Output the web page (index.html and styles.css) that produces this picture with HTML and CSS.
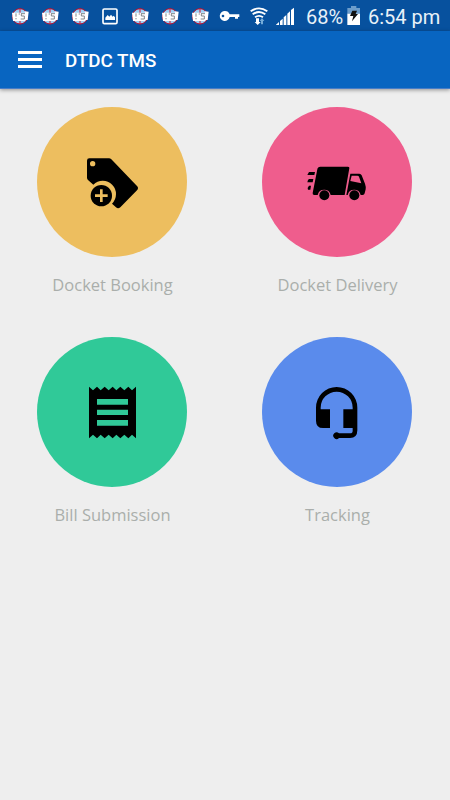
FILE: index.html
```html
<!DOCTYPE html>
<html lang="en">
<head>
  <meta charset="UTF-8" />
  <meta name="viewport" content="width=device-width, initial-scale=1.0" />
  <title>DTDC TMS</title>
  <link rel="stylesheet" href="styles.css">
</head>
<body>
  <svg width="0" height="0" class="symbols">
    <symbol id="app-badge" viewBox="0 0 90 93">
      <circle cx="45" cy="49" r="23" fill="#9fd0f4" stroke="#b50f2e" stroke-width="3" />
      <path d="M45 25v48" stroke="#d4142f" stroke-width="3" />
      <path d="M21 38h39v-4l11 1-3 25h-7v3H24z" fill="#fff" />
      <path d="M33 40v10M33 54v4M41 42h4M48 41h12M49 41v7h9v9H47" fill="none" stroke="#70767c" stroke-width="2.6" />
    </symbol>
  </svg>

  <div class="status-bar">
    <div class="status-icons">
      <svg><use href="#app-badge" /></svg>
      <svg><use href="#app-badge" /></svg>
      <svg><use href="#app-badge" /></svg>
      <svg viewBox="0 0 90 93">
        <rect x="24" y="27" width="42" height="44" rx="4" fill="none" stroke="#fff" stroke-width="5" />
        <path d="M31 60V53l7-8 5 5 5-6 5 6 3-3 4 5v8z" fill="#fff" />
      </svg>
      <svg><use href="#app-badge" /></svg>
      <svg><use href="#app-badge" /></svg>
      <svg><use href="#app-badge" /></svg>
      <svg viewBox="0 0 90 93">
        <path fill="#fff" fill-rule="evenodd" d="M30 33a15 15 0 0 1 14 10h29v8h-4v5h-9v-5H44A15 15 0 1 1 30 33zM24 44a4 4 0 1 0 0 8 4 4 0 0 0 0-8z" />
      </svg>
      <svg viewBox="0 0 90 93">
        <g fill="none" stroke="#fff" stroke-width="5.5">
          <path d="M17 34q25-18 50 0" />
          <path d="M23 43q19-14 38 0" />
          <path d="M30 52q12-9 24 0" />
        </g>
        <path d="M33 55h9v11h5l-9 9-9-9h4z" fill="#fff" />
        <path d="M48 73V63h-4l7-9 7 9h-4v10z" fill="#75acd8" />
      </svg>
      <svg viewBox="0 0 90 93">
        <g fill="#fff">
          <path d="M48 30l9-7v52h-9z" />
          <path d="M37 41l8-7v41h-8z" />
          <path d="M26 52l8-7v30h-8z" />
          <path d="M15 63l8-7v19h-8z" />
          <path d="M3 74l9-8v9H3z" />
        </g>
      </svg>
    </div>
    <span class="percent">68%</span>
    <svg class="battery" viewBox="0 0 42 60">
      <path d="M12 0h16v6h11v17H1V6h11z" fill="#6c9dcb" />
      <path d="M1 23h38v34H1z" fill="#fff" />
      <path d="M16 14h14l-4 10h7L15 46l4-16H9z" fill="#111" />
    </svg>
    <span class="clock">6:54 pm</span>
  </div>

  <header class="header">
    <button class="menu-btn" aria-label="Menu">
      <span></span>
      <span></span>
      <span></span>
    </button>
    <h1>DTDC TMS</h1>
  </header>

  <main class="menu">
    <a href="#" class="menu-item">
      <div class="circle booking">
        <svg viewBox="0 0 255 225">
          <path fill-rule="evenodd" d="M58 40h59q4 0 7 3l77 80q6 6 0 13l-50 51q-7 6-13 0l-12-11a39 39 0 0 0-56-57L54 105q-3-3-3-7V47q0-7 7-7zM68 48a8 8 0 1 0 0 16 8 8 0 0 0 0-16z" />
          <circle cx="94" cy="152" r="32" />
          <path class="cut" d="M94 133v38M75 152h38" />
        </svg>
      </div>
      <p>Docket Booking</p>
    </a>
    <a href="#" class="menu-item">
      <div class="circle delivery">
        <svg viewBox="0 0 255 225">
          <path d="M76 65h83q5 0 4 5l-14 80h-42a20 20 0 0 0-39 0H58q-6 0-5-6l14-71q1-8 9-8z" />
          <path fill-rule="evenodd" d="M166 86h27q5 0 7 5l10 25q3 8 2 17l-3 12q-1 5-6 5h-6a20 20 0 0 0-39 0h-4zM170 92l-4 16 33 7-7-20q-1-3-5-3z" />
          <circle cx="88" cy="151" r="15" />
          <circle cx="178" cy="151" r="15" />
          <path d="M42 81h18l-2 9H37zM42 102h13l-2 10H37l2-7zM42 122h6l-2 12h-7l-1-5z" />
        </svg>
      </div>
      <p>Docket Delivery</p>
    </a>
    <a href="#" class="menu-item">
      <div class="circle bill">
        <svg viewBox="0 0 255 225">
          <path fill-rule="evenodd" d="M57 35l12 11 12-11 11 11 12-11 12 11 12-11 11 11 12-11 12 11 12-11 11 11 12-11v155l-12-11-11 11-12-11-12 11-12-11-11 11-12-11-12 11-12-11-11 11-12-11-12 11zM81 72v17h93V72zM81 104v16h93v-16zM81 135v17h93v-17z" />
        </svg>
      </div>
      <p>Bill Submission</p>
    </a>
    <a href="#" class="menu-item">
      <div class="circle tracking">
        <svg viewBox="0 0 255 225">
          <path d="M125 36a62 62 0 0 1 62 62v68q0 23-22 23h-33a10 10 0 1 1 0-14h33q8 0 8-8v-8h-28v-56h28v-5a48 48 0 0 0-96 0v5h28v56H84q-21 0-21-22V98a62 62 0 0 1 62-62z" />
        </svg>
      </div>
      <p>Tracking</p>
    </a>
  </main>
</body>
</html>
```
FILE: styles.css
```css
* {
  box-sizing: border-box;
  margin: 0;
  padding: 0;
}

body {
  font-family: Roboto, "Liberation Sans", sans-serif;
  background: #eeeeee;
  min-height: 100vh;
  overflow: hidden;
}

.symbols {
  display: none;
}

.status-bar {
  display: flex;
  align-items: center;
  height: 31px;
  padding-left: 5px;
  background: #07519e;
  color: #e9f1f8;
  font-size: 20px;
  line-height: 31px;
  white-space: nowrap;
}

.status-icons {
  display: flex;
}

.status-icons svg {
  display: block;
  width: 30px;
  height: 31px;
}

.percent {
  width: 36px;
  margin-left: 1px;
  padding-top: 3px;
}

.battery {
  width: 14px;
  height: 20px;
  margin-left: 5px;
}

.clock {
  margin-left: 7px;
  padding-top: 3px;
}

.header {
  display: flex;
  align-items: center;
  height: 58px;
  padding-left: 18px;
  background: #0865c1;
  border-bottom: 1px solid #477dc7;
  box-shadow: 0 1px 4px rgba(0, 0, 0, 0.4);
  color: #fff;
}

.header h1 {
  margin-left: 23px;
  padding-top: 2px;
  font-size: 18.8px;
  font-weight: 500;
}

.menu-btn {
  display: flex;
  flex-direction: column;
  gap: 4px;
  width: 24px;
  border: none;
  background: none;
  cursor: pointer;
}

.menu-btn span {
  height: 3px;
  background: #fff;
}

.menu {
  display: grid;
  grid-template-columns: 1fr 1fr;
  grid-auto-rows: 230px;
  padding-top: 18.4px;
}

.menu-item {
  display: flex;
  flex-direction: column;
  align-items: center;
  color: #aaaeab;
  text-decoration: none;
}

.circle {
  display: flex;
  align-items: center;
  justify-content: center;
  width: 150px;
  height: 150px;
  margin-right: 0.2px;
  border-radius: 50%;
}

.circle svg {
  width: 85px;
  height: 75px;
}

.booking {
  background: #edbe5f;
}

.booking .cut {
  stroke: #edbe5f;
  stroke-width: 8;
}

.delivery {
  background: #ef5d8d;
}

.bill {
  background: #30c998;
}

.tracking {
  background: #5a8bec;
}

.menu-item p {
  margin-top: 16px;
  font-family: "Open Sans", sans-serif;
  font-size: 16.5px;
  line-height: 24px;
}
```
